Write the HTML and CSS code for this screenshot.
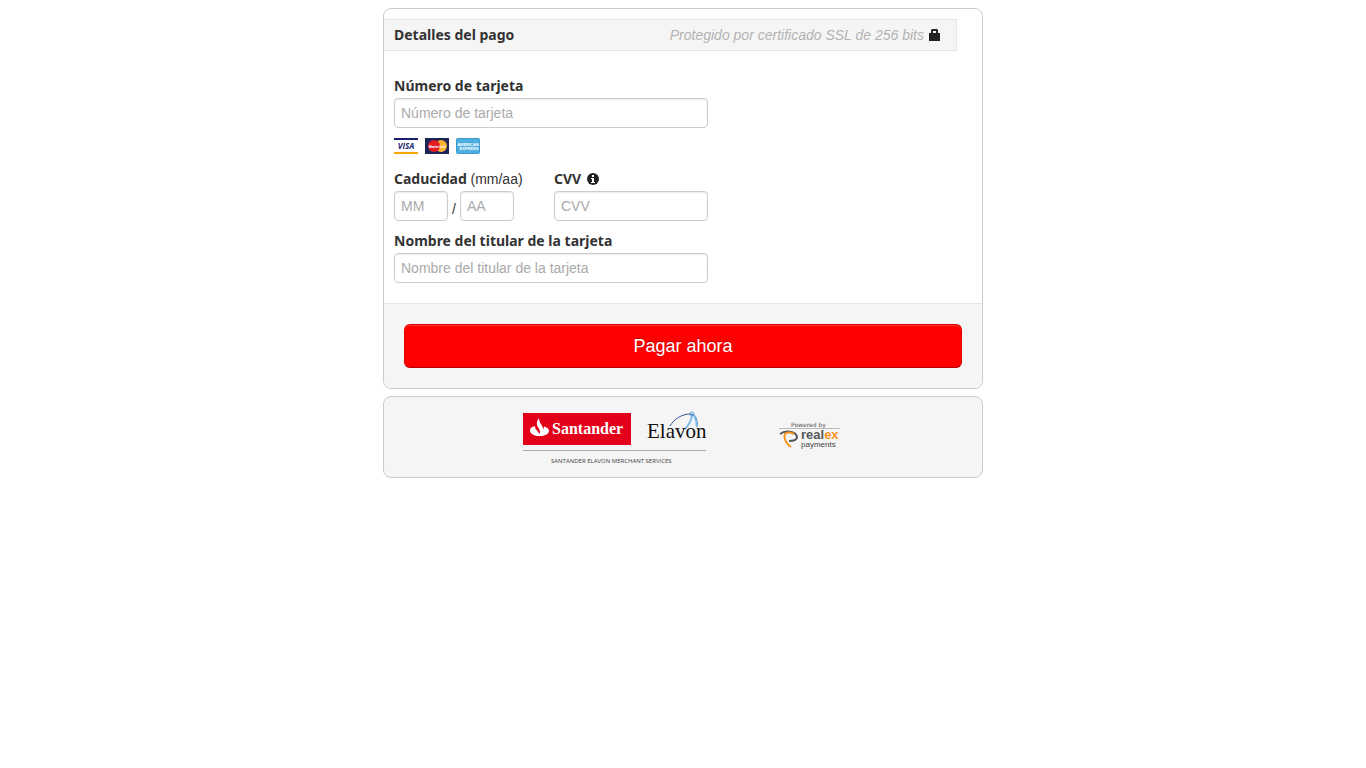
FILE: index.html
```html
<!DOCTYPE html>
<html lang="es">
  <head>
    <meta charset="UTF-8" />
    <meta name="viewport" content="width=device-width, initial-scale=1.0" />
    <title>Detalles del pago</title>
    <link rel="stylesheet" href="styles.css">
  </head>
  <body>
    <form class="payment">
      <div class="payment-header">
        <h1>Detalles del pago</h1>
        <p class="secure">
          <em>Protegido por certificado SSL de 256 bits</em>
          <svg class="lock" width="11" height="12" viewBox="0 0 11 12" aria-hidden="true">
            <path d="M0 4h2V1l1-1h5l1 1v3h2v8H0zM4 4h3V2H4z" fill="#222" fill-rule="evenodd" />
          </svg>
        </p>
      </div>

      <div class="fields">
        <div class="field">
          <label for="cardNumber">Número de tarjeta</label>
          <input type="text" id="cardNumber" placeholder="Número de tarjeta" />
        </div>

        <div class="cards">
          <svg width="24" height="16" viewBox="0 0 24 16" role="img" aria-label="Visa">
            <rect width="24" height="16" fill="#fff" />
            <rect width="24" height="2" fill="#1a1f71" />
            <rect y="14" width="24" height="2" fill="#f7a600" />
            <text x="12" y="11" class="visa-text" text-anchor="middle">VISA</text>
          </svg>
          <svg width="24" height="16" viewBox="0 0 24 16" role="img" aria-label="MasterCard">
            <rect width="24" height="16" fill="#1d2558" />
            <circle cx="16" cy="8" r="6" fill="#fcb131" />
            <circle cx="9" cy="8" r="6" fill="#e51b24" />
            <text x="12" y="10" class="mc-text" text-anchor="middle">MasterCard</text>
          </svg>
          <svg width="24" height="16" viewBox="0 0 24 16" role="img" aria-label="American Express">
            <rect x="0.5" y="0.5" width="23" height="15" rx="1" fill="#4fafe0" stroke="#3c9ad0" />
            <text x="12" y="8" class="amex-text" text-anchor="middle">AMERICAN</text>
            <text x="13" y="12" class="amex-text" text-anchor="middle">EXPRESS</text>
          </svg>
        </div>

        <div class="field-row">
          <div class="field expiry">
            <label for="expMonth">Caducidad <span>(mm/aa)</span></label>
            <div class="expiry-inputs">
              <input type="text" id="expMonth" placeholder="MM" maxlength="2" />
              <span>/</span>
              <input type="text" id="expYear" placeholder="AA" maxlength="2" aria-label="Año" />
            </div>
          </div>
          <div class="field cvv">
            <label for="cvv">CVV
              <svg class="info" width="12" height="12" viewBox="0 0 12 12" aria-hidden="true">
                <circle cx="6" cy="6" r="6" fill="#222" />
                <path d="M5 2h2v2H5zM4 5h3v4h1v1H4V9h1V6H4z" fill="#fff" />
              </svg>
            </label>
            <input type="text" id="cvv" placeholder="CVV" />
          </div>
        </div>

        <div class="field">
          <label for="holder">Nombre del titular de la tarjeta</label>
          <input type="text" id="holder" placeholder="Nombre del titular de la tarjeta" />
        </div>
      </div>

      <div class="actions">
        <button type="submit">Pagar ahora</button>
      </div>
    </form>

    <footer class="partners">
      <svg class="santander" width="184" height="54" viewBox="0 0 184 54" role="img" aria-label="Santander Elavon Merchant Services">
        <rect x="0" y="3" width="108" height="32" fill="#e2001a" />
        <path d="M7 20.500c0-2.500 2-3.800 5-4.500 0 2 .5 3 2 4.500l2.500 3.500c1-2 .5-3.500-1-6-2-3-2.500-6 .5-10 0 3 1 4.500 2.500 7 1 2 2 3 2 5l.5-3.500c3 1 5 2 5 4.500 0 3-4.500 5-9.500 5S7 24 7 20.500z" fill="#fff" />
        <text x="29" y="24" class="santander-text">Santander</text>
        <path d="M147 16C151 9 159 4 167 4c5 0 8 5 7 13" fill="none" stroke="#31549c" />
        <path d="M169 5q-1 8-7 14M171 5q3 6 3 12" fill="none" stroke="#7ab8e6" stroke-width="2" />
        <circle cx="169" cy="4" r="2" fill="none" stroke="#5aa0d8" />
        <text x="124" y="28" class="elavon-text">Elavon</text>
        <rect y="40" width="183" height="1" fill="#aaa" />
        <text x="28" y="53" class="services-text">SANTANDER ELAVON MERCHANT SERVICES</text>
      </svg>
      <svg class="realex" width="62" height="34" viewBox="0 0 62 34" role="img" aria-label="Powered by Realex Payments">
        <text x="12" y="7" class="powered-text">Powered by</text>
        <rect y="8" width="61" height="1" fill="#bbb" />
        <path d="M1 14C6 10 17 11 18 17c0 3-4 4-8 4" fill="none" stroke="#55585a" stroke-width="2" />
        <path d="M15 14C8 11 4 13 6 19c1 4 3 6 6 8" fill="none" stroke="#f7941d" stroke-width="2" />
        <text x="22" y="19" class="realex-text">real<tspan fill="#f7941d">ex</tspan></text>
        <text x="22" y="27" class="payments-text">payments</text>
      </svg>
    </footer>
  </body>
</html>
```
FILE: styles.css
```css
* {
  box-sizing: border-box;
}

body {
  margin: 8px;
  background: #fff;
  color: #333;
  font-family: "Helvetica Neue", Helvetica, Arial, "Liberation Sans", sans-serif;
  font-size: 14px;
  line-height: 20px;
}

.payment,
.partners {
  max-width: 600px;
  margin: 0 auto;
  border: 1px solid #ccc;
  border-radius: 8px;
  overflow: hidden;
}

.payment-header {
  display: flex;
  justify-content: space-between;
  align-items: center;
  margin: 10px 25px 0 0;
  padding: 5px 16px 5px 10px;
  background: #f5f5f5;
  border: 1px solid #e5e5e5;
  border-left: none;
}

h1,
.secure {
  margin: 0;
  font-size: 14px;
  line-height: 20px;
}

h1,
label {
  font-family: "Noto Sans", sans-serif;
}

.secure {
  display: flex;
  align-items: center;
  gap: 5px;
}

.secure em {
  color: #b3b3b3;
}

.fields {
  padding: 25px 10px 20px;
}

label {
  display: block;
  height: 20px;
  margin-bottom: 2px;
  font-weight: bold;
}

label span {
  font-family: "Liberation Sans", sans-serif;
  font-weight: normal;
}

input {
  display: block;
  width: 100%;
  height: 30px;
  padding: 4px 6px;
  border: 1px solid #ccc;
  border-radius: 4px;
  box-shadow: inset 0 1px 1px rgba(0, 0, 0, 0.08);
  color: #555;
  font: inherit;
}

input::placeholder {
  color: #aaa;
}

.field,
.field-row {
  max-width: 314px;
}

.cards {
  display: flex;
  gap: 7px;
  margin: 10px 0 15px;
}

.field-row {
  display: flex;
  justify-content: space-between;
  margin-bottom: 10px;
}

.expiry-inputs {
  display: flex;
  align-items: flex-end;
  gap: 4px;
}

.expiry-inputs input {
  width: 54px;
}

.expiry-inputs span {
  line-height: 24px;
}

.cvv {
  width: 154px;
}

.info {
  margin-left: 2px;
  vertical-align: -1px;
}

.actions {
  padding: 20px;
  background: #f5f5f5;
  border-top: 1px solid #e5e5e5;
}

button {
  display: block;
  width: 100%;
  padding: 10px 19px;
  background: #f00;
  border: 1px solid #d00;
  border-bottom-color: #b30000;
  border-radius: 6px;
  box-shadow: inset 0 1px 0 rgba(255, 255, 255, 0.2);
  color: #fff;
  font-family: inherit;
  font-size: 18px;
  line-height: 22px;
  text-shadow: 0 -1px 0 rgba(0, 0, 0, 0.25);
  cursor: pointer;
}

.partners {
  display: flex;
  justify-content: center;
  align-items: center;
  gap: 72px;
  margin-top: 7px;
  padding: 13px 15px 13px 13px;
  background: #f5f5f5;
}

.visa-text {
  fill: #1a1f71;
  font: italic bold 8px "Open Sans", sans-serif;
}

.mc-text {
  fill: #fff;
  font: italic bold 3px "Open Sans", sans-serif;
}

.amex-text {
  fill: #fff;
  font: bold 4px "Liberation Sans", sans-serif;
}

.santander-text {
  fill: #fff;
  font: bold 16px "Liberation Serif", serif;
}

.elavon-text {
  fill: #111;
  font: 21px "Liberation Serif", serif;
}

.services-text {
  fill: #444;
  font: 6px "Open Sans", sans-serif;
}

.powered-text {
  fill: #555;
  font: 6px "DejaVu Sans", sans-serif;
}

.realex-text {
  fill: #55585a;
  font: bold 13px "Liberation Sans", sans-serif;
}

.payments-text {
  fill: #444;
  font: 8px "Liberation Sans", sans-serif;
}
```
